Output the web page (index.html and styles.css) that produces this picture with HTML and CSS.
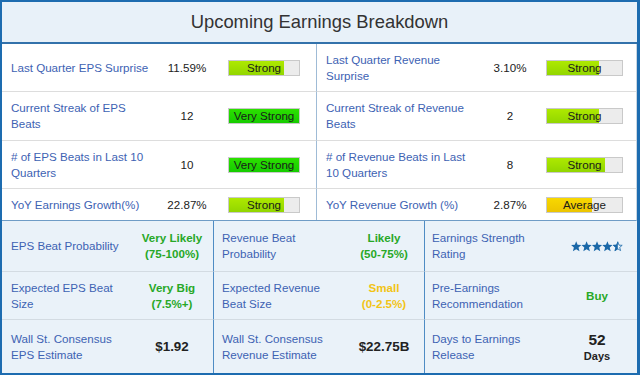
FILE: index.html
```html
<!DOCTYPE html>
<html>
<head>
<meta charset="utf-8">
<link rel="stylesheet" href="styles.css">
</head>
<body>
<div class="card">
  <div class="header">Upcoming Earnings Breakdown</div>
  <div class="top">
    <div class="cell l"><span class="lbl">Last Quarter EPS Surprise</span><span class="val">11.59%</span><span class="bar strong" style="--p:78%">Strong</span></div>
    <div class="cell r"><span class="lbl">Last Quarter Revenue Surprise</span><span class="val">3.10%</span><span class="bar strong" style="--p:70%">Strong</span></div>
    <div class="cell l"><span class="lbl">Current Streak of EPS Beats</span><span class="val">12</span><span class="bar vstrong" style="--p:100%">Very Strong</span></div>
    <div class="cell r"><span class="lbl">Current Streak of Revenue Beats</span><span class="val">2</span><span class="bar strong" style="--p:70%">Strong</span></div>
    <div class="cell l"><span class="lbl"># of EPS Beats in Last 10 Quarters</span><span class="val">10</span><span class="bar vstrong" style="--p:100%">Very Strong</span></div>
    <div class="cell r"><span class="lbl"># of Revenue Beats in Last 10 Quarters</span><span class="val">8</span><span class="bar strong" style="--p:78%">Strong</span></div>
    <div class="cell l last"><span class="lbl">YoY Earnings Growth(%)</span><span class="val">22.87%</span><span class="bar strong" style="--p:78%">Strong</span></div>
    <div class="cell r last"><span class="lbl">YoY Revenue Growth (%)</span><span class="val">2.87%</span><span class="bar avg" style="--p:60%">Average</span></div>
  </div>
  <div class="bottom">
    <div class="bc c1"><span class="lbl">EPS Beat Probability</span><span class="bv green">Very Likely<br>(75-100%)</span></div>
    <div class="bc c2"><span class="lbl">Revenue Beat Probability</span><span class="bv green">Likely<br>(50-75%)</span></div>
    <div class="bc c3"><span class="lbl">Earnings Strength Rating</span><span class="bv">
      <svg class="stars" width="52" height="11" viewBox="0 0 52 11">
        <g fill="#1a68a8">
          <path d="M5.2 0.3 L6.6 3.8 L10.3 4 L7.5 6.4 L8.5 10.3 L5.2 8.2 L1.9 10.3 L2.9 6.4 L0.1 4 L3.8 3.8 Z"/>
          <path transform="translate(10.4 0)" d="M5.2 0.3 L6.6 3.8 L10.3 4 L7.5 6.4 L8.5 10.3 L5.2 8.2 L1.9 10.3 L2.9 6.4 L0.1 4 L3.8 3.8 Z"/>
          <path transform="translate(20.8 0)" d="M5.2 0.3 L6.6 3.8 L10.3 4 L7.5 6.4 L8.5 10.3 L5.2 8.2 L1.9 10.3 L2.9 6.4 L0.1 4 L3.8 3.8 Z"/>
          <path transform="translate(31.2 0)" d="M5.2 0.3 L6.6 3.8 L10.3 4 L7.5 6.4 L8.5 10.3 L5.2 8.2 L1.9 10.3 L2.9 6.4 L0.1 4 L3.8 3.8 Z"/>
          <path transform="translate(41.6 0)" d="M5.2 0.3 L5.2 8.2 L1.9 10.3 L2.9 6.4 L0.1 4 L3.8 3.8 Z"/>
        </g>
        <path transform="translate(41.6 0)" fill="none" stroke="#1a68a8" stroke-width="0.8" stroke-linejoin="round" d="M5.2 0.8 L6.4 4.2 L9.6 4.3 L7.1 6.4 L8 9.6 L5.2 7.8 L2.4 9.6 L3.3 6.4 L0.8 4.3 L4 4.2 Z"/>
      </svg></span></div>
    <div class="bc c1"><span class="lbl">Expected EPS Beat Size</span><span class="bv green">Very Big<br>(7.5%+)</span></div>
    <div class="bc c2"><span class="lbl">Expected Revenue Beat Size</span><span class="bv yellow">Small<br>(0-2.5%)</span></div>
    <div class="bc c3"><span class="lbl">Pre-Earnings Recommendation</span><span class="bv green">Buy</span></div>
    <div class="bc c1 last"><span class="lbl">Wall St. Consensus EPS Estimate</span><span class="bv money">$1.92</span></div>
    <div class="bc c2 last"><span class="lbl">Wall St. Consensus Revenue Estimate</span><span class="bv money">$22.75B</span></div>
    <div class="bc c3 last"><span class="lbl">Days to Earnings Release</span><span class="bv days"><span class="num">52</span><span class="unit">Days</span></span></div>
  </div>
</div>
</body>
</html>
```

FILE: styles.css
```css
html, body {
  margin: 0;
  padding: 0;
  background: #ffffff;
}

.card {
  width: 640px;
  height: 375px;
  box-sizing: border-box;
  border: 2px solid #1d6cb0;
  border-right-width: 3px;
  display: flex;
  flex-direction: column;
  font-family: "Liberation Sans", Arial, sans-serif;
  font-size: 11.6px;
  line-height: 16px;
  color: #222;
}

.header {
  height: 40px;
  flex: none;
  background: #e8f1f9;
  border-bottom: 2px solid #3372ab;
  display: flex;
  align-items: center;
  justify-content: center;
  font-size: 18.4px;
  color: #333;
}

.top {
  flex: none;
  display: grid;
  grid-template-columns: 315px 1fr;
  grid-template-rows: 48px 49px 48px 31px;
  background: #ffffff;
  border-bottom: 1px solid #6f9cc6;
  border-right: 1px solid #c9d6e2;
}

.cell {
  display: grid;
  align-items: center;
  padding-left: 9px;
  border-bottom: 1px solid #dddddd;
}

.cell.last {
  border-bottom: none;
}

.cell.l {
  grid-template-columns: 141px 70px 78px;
  border-right: 1px solid #9fbbd6;
}

.cell.r {
  grid-template-columns: 149px 70px 78px;
}

.lbl {
  color: #3d62b3;
}

.val {
  text-align: center;
  color: #222;
}

.bar {
  height: 16px;
  box-sizing: border-box;
  border: 1px solid #c9c9c9;
  text-align: center;
  line-height: 14px;
  color: #1a1a1a;
  background: linear-gradient(to right, transparent var(--p), #ececec var(--p)), linear-gradient(#aee900, #92d600);
}

.cell.l .bar {
  margin-left: 6px;
}

.cell.r .bar {
  margin-left: 1px;
}

.bar.vstrong {
  background: linear-gradient(to right, transparent var(--p), #ececec var(--p)), linear-gradient(#2ce000, #16cc00);
}

.bar.avg {
  background: linear-gradient(to right, transparent var(--p), #ececec var(--p)), linear-gradient(#f8d800, #ecc400);
}

.bottom {
  flex: 1;
  display: grid;
  grid-template-columns: 212px 211px 1fr;
  grid-template-rows: 51px 48px 1fr;
  background: #eaf2f9;
}

.bc {
  display: grid;
  align-items: center;
  column-gap: 10px;
  border-bottom: 1px solid #d3dbe2;
}

.bc.last {
  border-bottom: none;
}

.bc.c1 {
  grid-template-columns: 116px 70px;
  padding-left: 9px;
  border-right: 1px solid #4f8cc4;
}

.bc.c2 {
  grid-template-columns: 117px 70px;
  padding-left: 8px;
  border-right: 1px solid #4f8cc4;
}

.bc.c3 {
  grid-template-columns: 120px 70px;
  padding-left: 7px;
}

.bv {
  text-align: center;
  font-weight: bold;
}

.green {
  color: #27a827;
}

.yellow {
  color: #f2c416;
}

.money {
  font-size: 13.4px;
  color: #222;
}

.stars {
  display: block;
  margin: 0 auto;
}

.days {
  display: flex;
  flex-direction: column;
  align-items: center;
  color: #222;
}

.days .num {
  font-size: 15.4px;
  line-height: 18px;
}

.days .unit {
  font-size: 11px;
  line-height: 14px;
}
```
